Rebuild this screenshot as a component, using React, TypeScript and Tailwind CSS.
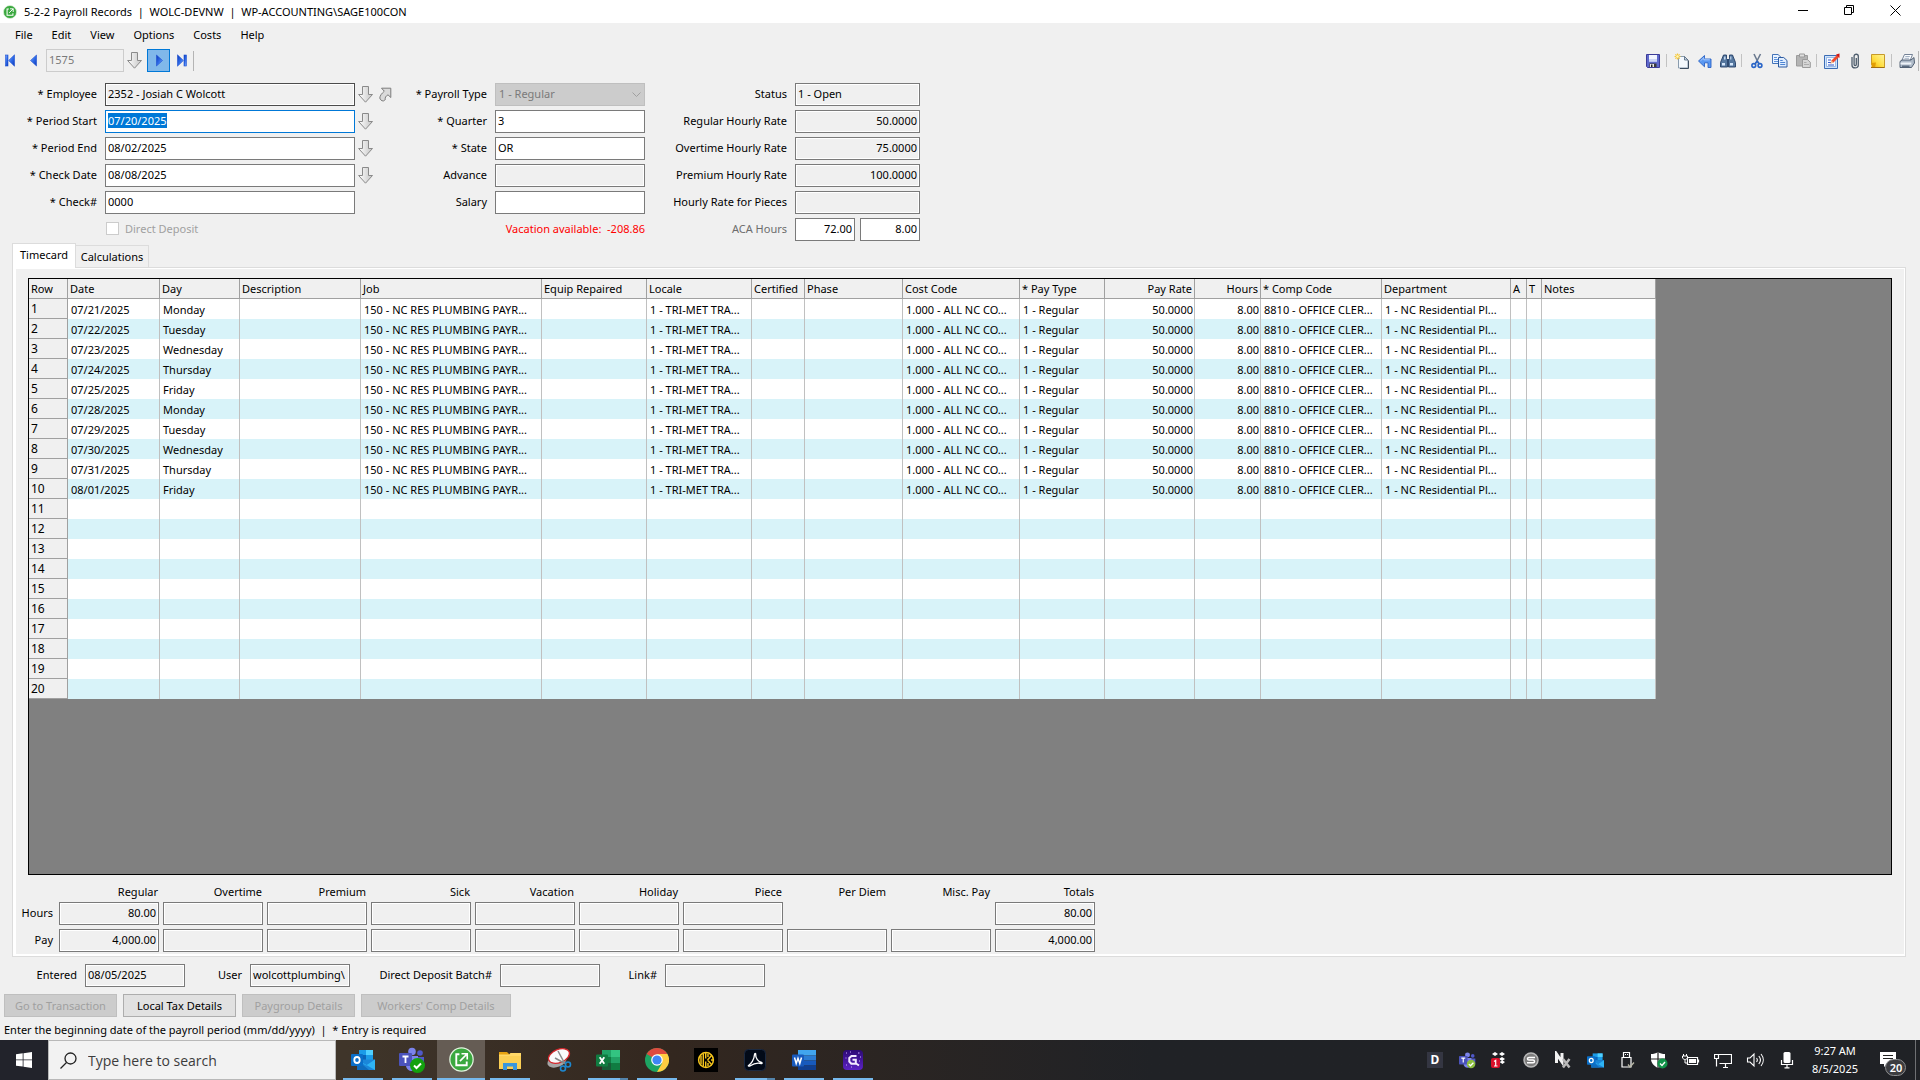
import { useEffect, useRef, type ReactNode } from "react";

/* ---------- field primitives ---------- */

const FIELD = "h-[23px] min-w-0 border px-0.5 pb-0.5 text-[11px] outline-none";
const READONLY = "bg-[#f0f0f0] shadow-[inset_0_0_0_1px_#fff]";

function Field({
  id,
  value = "",
  width,
  readOnly = false,
  right = false,
  dark = false,
  label,
}: {
  id: string;
  value?: string;
  width: string;
  readOnly?: boolean;
  right?: boolean;
  dark?: boolean;
  label?: string;
}) {
  return (
    <input
      id={id}
      aria-label={label}
      type="text"
      defaultValue={value}
      readOnly={readOnly}
      className={`${FIELD} ${width} ${dark ? "border-[#4c4c4c]" : "border-[#7a7a7a]"} ${readOnly ? READONLY : "bg-white"} ${right ? "text-right" : ""}`}
    />
  );
}

function Row({ id, label, labelWidth, muted, children }: { id: string; label: string; labelWidth: string; muted?: boolean; children: ReactNode }) {
  return (
    <div className="flex h-[23px] items-center">
      <label htmlFor={id} className={`mr-2 pb-px text-right whitespace-nowrap ${labelWidth} ${muted ? "text-[#6d6d6d]" : ""}`}>
        {label}
      </label>
      {children}
    </div>
  );
}

/* ---------- small arrows ---------- */

function DownArrow() {
  return (
    <svg width="15" height="17" viewBox="0 0 15 17" aria-hidden="true">
      <defs>
        <linearGradient id="silver" x1="0" y1="0" x2="1" y2="0">
          <stop offset="0" stopColor="#fff" />
          <stop offset="1" stopColor="#c4c4c4" />
        </linearGradient>
      </defs>
      <path d="M4.500.5h6v8h4L7.500 16.200.6 8.500h3.900z" fill="url(#silver)" stroke="#8a8a8a" />
    </svg>
  );
}

function LookupButton({ label }: { label: string }) {
  return (
    <button type="button" aria-label={label} className="ml-[3px] flex h-[23px] w-[15px] items-center justify-center">
      <DownArrow />
    </button>
  );
}

function DrillArrow() {
  return (
    <svg width="13" height="15" viewBox="0 0 13 15" aria-hidden="true">
      <path
        d="M2.500 1.200H11.800V10.500L9 7.800C6.800 9 5.800 10.600 6.300 12.600L4.300 14C2.500 13.800 1.200 12.800.8 11C1 8.500 2.600 6.600 5.300 4.200z"
        fill="#dadada"
        stroke="#7c7c7c"
      />
    </svg>
  );
}

/* ---------- record navigation icons ---------- */

function NavIcon({ kind }: { kind: "first" | "prev" | "next" | "last" }) {
  const flip = kind === "next" || kind === "last";
  const bar = kind === "first" || kind === "last";
  return (
    <svg width="10" height="13" viewBox="0 0 10 13" aria-hidden="true" className={flip ? "rotate-180" : ""}>
      <defs>
        <linearGradient id={`nav-${kind}`} x1="0" y1="0" x2="1" y2="1">
          <stop offset="0" stopColor="#8fb6ff" />
          <stop offset=".5" stopColor="#2f6be8" />
          <stop offset="1" stopColor="#0b38b8" />
        </linearGradient>
      </defs>
      {bar && <rect x=".5" y="1" width="2.500" height="11" fill={`url(#nav-${kind})`} stroke="#1c4fd0" strokeWidth=".6" />}
      <path d={bar ? "M9.500.800V12.200L3.600 6.500z" : "M7.500 1V12L1.500 6.500z"} fill={`url(#nav-${kind})`} stroke="#1c4fd0" strokeWidth=".6" />
    </svg>
  );
}

/* ---------- toolbar icons ---------- */

const ic = { width: 16, height: 16, viewBox: "0 0 16 16", "aria-hidden": true } as const;

const SaveIcon = () => (
  <svg {...ic}>
    <path d="M1.500 1.500h13v13h-12l-1-1z" fill="#5f69cc" stroke="#3c3c98" />
    <path d="M4 2h8v6.500H4z" fill="#f2f5ff" />
    <path d="M4 6h8v2.500H4z" fill="#cdd6f6" />
    <path d="M4.500 10.500h7V14h-7z" fill="#3b3b3b" />
    <path d="M5 11h4v3H5z" fill="#e9e9e9" />
    <path d="M6 11.500h1.500V14H6z" fill="#222" />
  </svg>
);
const NewIcon = () => (
  <svg {...ic}>
    <path d="M5 3.500h5.500l3.500 3.500v8H4.500V6z" fill="#f3f8fd" stroke="#8a9cae" />
    <path d="M10.500 3.500V7H14z" fill="#c6d6e6" stroke="#4f6378" strokeWidth=".8" />
    <path d="M14.500 7.500v8H6" fill="none" stroke="#3b4d60" />
    <path d="M3.500.5v6M.5 3.500h6M1.400 1.400l4.200 4.200M5.600 1.400 1.400 5.600" stroke="#f5c73a" strokeWidth="1.200" />
    <circle cx="3.500" cy="3.500" r="1.300" fill="#fff6b8" />
  </svg>
);
const UndoIcon = () => (
  <svg {...ic}>
    <path d="M1.500 8 7.500 2.500V6h6.500v8.500h-3V9.800H7.500v4z" fill="#5a98f2" stroke="#2a62c4" strokeWidth=".9" />
    <path d="M3.500 7.800 6.800 4.800v2h6" fill="none" stroke="#a9cbff" />
  </svg>
);
const FindIcon = () => (
  <svg {...ic}>
    <path d="M3.500 2h3v3.500l1 1.500v7h-7V9.500zM9.500 2h3l3 7.500V14h-7V7l1-1.500z" fill="#55779f" stroke="#243f66" strokeWidth=".9" />
    <path d="M7 6h2v4H7z" fill="#2c4a73" />
    <path d="M2 10h3v2.500H2zM10 10h3v2.500h-3zM4.300 3.500h1.200v3H4zM10.300 3.500h1v3h-1z" fill="#d4e6fb" />
  </svg>
);
const CutIcon = () => (
  <svg {...ic}>
    <path d="M5 1 9.600 10.500M11.500 1 6.700 10.500" stroke="#6b7a90" strokeWidth="1.600" />
    <circle cx="4.800" cy="12.500" r="1.900" fill="none" stroke="#2b66c8" strokeWidth="1.600" />
    <circle cx="11" cy="12.500" r="1.900" fill="none" stroke="#2b66c8" strokeWidth="1.600" />
    <path d="m6 10.700 2.100-2.500 2.200 2.500" fill="none" stroke="#2b66c8" strokeWidth="1.500" />
  </svg>
);
const CopyIcon = () => (
  <svg {...ic}>
    <path d="M.5 1.500H6l3 2.800v6.200H.5z" fill="#eaf3ff" stroke="#4373b8" />
    <path d="M2 4.500h3M2 6.500h4M2 8.500h4" stroke="#5e93dc" />
    <path d="M6.500 4.500h5.200l3.300 3v6.500H6.500z" fill="#dfedff" stroke="#2e5ba0" />
    <path d="M8.200 7.500h2.500M8.200 9.500h5M8.200 11.500h5" stroke="#4d84d2" />
  </svg>
);
const PasteIcon = () => (
  <svg {...ic}>
    <path d="M1.500 2.500h11v10.500h-11z" fill="#b4b4b4" stroke="#9c9c9c" />
    <path d="M4.500 1h5v3h-5z" fill="#dedede" stroke="#9b9b9b" />
    <path d="M7.500 6.500h4.800l3 2.700v5.300H7.500z" fill="#d6d6d6" stroke="#9a9a9a" />
    <path d="M9 9.500h2.500M9 11.500h5" stroke="#adadad" />
  </svg>
);
const EditIcon = () => (
  <svg {...ic}>
    <path d="M.5 2.500h13v13H.5z" fill="#cfe3fb" stroke="#3c6cb4" />
    <path d="M2.500 4.500h9v9h-9z" fill="#f6faff" stroke="#7aa4dd" strokeWidth=".7" />
    <path d="M4 7h3M4 9.500h3M4 12h6" stroke="#3156c8" strokeWidth="1.200" />
    <path d="m6.500 10.500 1-3L13 2l2 2-5.500 5.500z" fill="#f04b2c" />
    <path d="M12 1.500 15.500.5V5z" fill="#d01414" />
    <path d="m6.500 10.500 1-3 2 2z" fill="#f6c89a" />
  </svg>
);
const ClipIcon = () => (
  <svg {...ic}>
    <path d="M5 4v8.200c0 3.600 6.300 3.600 6.300 0V3.200c0-2.600-4.200-2.600-4.200 0v8.300c0 1.500 2.200 1.500 2.200 0V5" fill="none" stroke="#4d5c6c" strokeWidth="1.300" />
  </svg>
);
const NoteIcon = () => (
  <svg {...ic}>
    <defs>
      <linearGradient id="note" x1="1" y1="0" x2="0" y2="1">
        <stop offset="0" stopColor="#fff7a0" />
        <stop offset=".6" stopColor="#ffdc3c" />
        <stop offset="1" stopColor="#f0a800" />
      </linearGradient>
    </defs>
    <path d="M1.500 1.500h13v13h-10l-3-3z" fill="url(#note)" stroke="#c79a2a" />
    <path d="M1.500 10 6 9.500l-1 5H1.500z" fill="#e29e05" />
    <path d="M1 14.500h13.500" stroke="#a06e10" />
  </svg>
);
const PrintIcon = () => (
  <svg {...ic}>
    <path d="M5.500 1.500h8l-2.300 6H2.800z" fill="#fafcff" stroke="#65758a" strokeWidth=".9" />
    <path d="M6.300 3.500h4.500M5.500 5.300H10" stroke="#8fa0b5" strokeWidth=".8" />
    <path d="M1 8.500 3 7h9l3-2.500.5 5.500-3 4.500H1z" fill="#aebac8" stroke="#46566a" strokeWidth=".9" />
    <path d="M1.500 9.500h10.800v2H1.500z" fill="#eef3f8" />
    <path d="M3 12.500h7.500V14H3z" fill="#5c6c80" />
  </svg>
);

const Sep = () => <span className="mx-0.5 h-[13px] w-0.5 border-l border-[#c2c2c2]" />;

function ToolButton({ label, children }: { label: string; children: ReactNode }) {
  return (
    <button type="button" aria-label={label} className="flex h-[23px] w-[23px] items-center justify-center">
      {children}
    </button>
  );
}

function SageLogo({ size }: { size: number }) {
  return (
    <svg width={size} height={size} viewBox="0 0 24 24" aria-hidden="true">
      <circle cx="12" cy="12" r="11.200" fill="#3aa83f" stroke="#e3f3e0" strokeWidth="1.200" />
      <path d="M10 7H7v10.500h10V14" fill="none" stroke="#fff" strokeWidth="1.800" />
      <path d="M12 6.500h5.500V12M17.500 6.500 10.500 13.500" fill="none" stroke="#fff" strokeWidth="1.600" />
    </svg>
  );
}

/* ---------- timecard grid ---------- */

type Column = { title: string; width: string; right?: boolean };

const COLUMNS: Column[] = [
  { title: "Row", width: "w-[39px]" },
  { title: "Date", width: "w-[92px]" },
  { title: "Day", width: "w-[80px]" },
  { title: "Description", width: "w-[121px]" },
  { title: "Job", width: "w-[181px]" },
  { title: "Equip Repaired", width: "w-[105px]" },
  { title: "Locale", width: "w-[105px]" },
  { title: "Certified", width: "w-[53px]" },
  { title: "Phase", width: "w-[98px]" },
  { title: "Cost Code", width: "w-[117px]" },
  { title: "* Pay Type", width: "w-[85px]" },
  { title: "Pay Rate", width: "w-[90px]", right: true },
  { title: "Hours", width: "w-[66px]", right: true },
  { title: "* Comp Code", width: "w-[121px]" },
  { title: "Department", width: "w-[129px]" },
  { title: "A", width: "w-[16px]" },
  { title: "T", width: "w-[15px]" },
  { title: "Notes", width: "w-[114px]" },
];

const DAYS: [string, string][] = [
  ["07/21/2025", "Monday"],
  ["07/22/2025", "Tuesday"],
  ["07/23/2025", "Wednesday"],
  ["07/24/2025", "Thursday"],
  ["07/25/2025", "Friday"],
  ["07/28/2025", "Monday"],
  ["07/29/2025", "Tuesday"],
  ["07/30/2025", "Wednesday"],
  ["07/31/2025", "Thursday"],
  ["08/01/2025", "Friday"],
];

function cellsFor(row: number): string[] {
  const day = DAYS[row];
  if (!day) return Array(17).fill("");
  return [
    day[0],
    day[1],
    "",
    "150 - NC RES PLUMBING PAYR...",
    "",
    "1 - TRI-MET TRA...",
    "",
    "",
    "1.000 - ALL NC CO...",
    "1 - Regular",
    "50.0000",
    "8.00",
    "8810 - OFFICE CLER...",
    "1 - NC Residential Pl...",
    "",
    "",
    "",
  ];
}

function TimecardGrid() {
  return (
    <div className="flex-1 overflow-hidden border border-black bg-[#808080]">
      <table className="w-[1627px] table-fixed border-separate border-spacing-0">
        <colgroup>
          {COLUMNS.map((c) => (
            <col key={c.title} className={c.width} />
          ))}
        </colgroup>
        <thead>
          <tr>
            {COLUMNS.map((c) => (
              <th
                key={c.title}
                scope="col"
                className={`h-5 overflow-hidden border-r border-b border-[#a0a0a0] bg-[#f0f0f0] px-0.5 py-0 leading-[19px] font-normal whitespace-nowrap ${c.right ? "text-right" : "text-left"}`}
              >
                {c.title}
              </th>
            ))}
          </tr>
        </thead>
        <tbody>
          {Array.from({ length: 20 }, (_, r) => (
            <tr key={r} className="bg-white even:bg-[#d8f3f9]">
              <th scope="row" className="h-5 border-r border-b border-[#a0a0a0] bg-[#f0f0f0] px-0.5 py-0 text-left align-top text-xs leading-[19px] font-normal">
                {r + 1}
              </th>
              {cellsFor(r).map((text, i) => (
                <td
                  key={i}
                  className={`h-5 overflow-hidden border-r border-[#c0c0c0] pt-px leading-[19px] whitespace-nowrap ${COLUMNS[i + 1].right ? "pr-px text-right" : "pl-[3px]"}`}
                >
                  {text}
                </td>
              ))}
            </tr>
          ))}
        </tbody>
      </table>
    </div>
  );
}

/* ---------- totals ---------- */

const TOTALS: { name: string; hours?: string; pay: string }[] = [
  { name: "Regular", hours: "80.00", pay: "4,000.00" },
  { name: "Overtime", hours: "", pay: "" },
  { name: "Premium", hours: "", pay: "" },
  { name: "Sick", hours: "", pay: "" },
  { name: "Vacation", hours: "", pay: "" },
  { name: "Holiday", hours: "", pay: "" },
  { name: "Piece", hours: "", pay: "" },
  { name: "Per Diem", pay: "" },
  { name: "Misc. Pay", pay: "" },
  { name: "Totals", hours: "80.00", pay: "4,000.00" },
];

function Totals() {
  return (
    <div className="flex gap-1 pt-2 pb-0.5">
      <div className="flex w-[39px] flex-col gap-1 pt-[19px] text-right">
        <span className="h-[23px] pr-0.5 leading-[21px]">Hours</span>
        <span className="h-[23px] pr-0.5 leading-[21px]">Pay</span>
      </div>
      {TOTALS.map((t) => (
        <div key={t.name} className="flex w-[100px] flex-col">
          <span className="h-[19px] pr-px text-right leading-[18px]">{t.name}</span>
          <div className="mb-1 flex h-[23px]">
            {t.hours !== undefined && <Field id={`h-${t.name}`} label={`${t.name} hours`} value={t.hours} width="w-full" readOnly right />}
          </div>
          <Field id={`p-${t.name}`} label={`${t.name} pay`} value={t.pay} width="w-full" readOnly right />
        </div>
      ))}
    </div>
  );
}

/* ---------- taskbar icons ---------- */

const OutlookIcon = ({ size }: { size: number }) => (
  <svg width={size} height={size} viewBox="0 0 24 24" aria-hidden="true">
    <path d="M8 2h14v10H8z" fill="#1a9be8" />
    <path d="M15 2h7v5h-7z" fill="#50d0ff" />
    <path d="M8 7h7v5H8z" fill="#0a64b8" />
    <path d="M6 11.500h18V22H6z" fill="#1a86d9" />
    <path d="m6 11.500 9 6 9-6V22z" fill="#2fb4f5" />
    <path d="m6 12 12 10H6z" fill="#0f6cbd" />
    <rect x="0" y="6" width="12" height="12" rx="1" fill="#0a6fc9" />
    <ellipse cx="6" cy="12" rx="2.700" ry="3" fill="none" stroke="#fff" strokeWidth="1.800" />
  </svg>
);
const TeamsIcon = ({ size, small = false }: { size: number; small?: boolean }) => (
  <svg width={size} height={size} viewBox="0 0 26 26" aria-hidden="true">
    <circle cx="13" cy="4.500" r="3.800" fill="#7b83eb" />
    <circle cx="21" cy="6" r="2.800" fill="#5059c9" />
    <path d="M17 10h8v7c0 4-6 5-8 2z" fill="#5059c9" />
    <path d="M7 9h12v9c0 8-12 8-12 0z" fill="#7b83eb" />
    <rect x="0" y="6" width="13" height="13" rx="1" fill="#4b53bc" />
    <path d="M3.500 9.500h6M6.500 9.500V16" stroke="#fff" strokeWidth="1.800" />
    <circle cx="18.500" cy="18.500" r={small ? 6.500 : 7.500} fill={small ? "#8cbd3f" : "#13a10e"} />
    <path d="m15 18.500 2.500 2.500 4.500-4.500" fill="none" stroke="#fff" strokeWidth="2" />
  </svg>
);
const ExplorerIcon = () => (
  <svg width="24" height="24" viewBox="0 0 24 24" aria-hidden="true">
    <path d="M1 4h8l2 2v4H1z" fill="#e6a211" />
    <path d="M1 6.500h10l1.500-1.500H23v16H1z" fill="#ffd868" />
    <path d="M1 8h22v13H1z" fill="#fbcf55" />
    <path d="M5 22v-7h14v7h-4v-3.500H9V22z" fill="#3a96dd" />
  </svg>
);
const SnipIcon = () => (
  <svg width="26" height="26" viewBox="0 0 26 26" aria-hidden="true">
    <ellipse cx="11" cy="14" rx="10" ry="6" transform="rotate(-22 11 14)" fill="#a6a6a6" />
    <ellipse cx="13" cy="9" rx="11" ry="6.500" transform="rotate(-22 13 9)" fill="#fafafa" stroke="#d6272c" strokeWidth="1.300" />
    <path d="m12 4 7 13M9 11l9 5" stroke="#8a8a8a" strokeWidth="1.500" />
    <circle cx="17" cy="21.500" r="2.500" fill="none" stroke="#1e88d0" strokeWidth="1.600" />
    <circle cx="22" cy="17.500" r="2.500" fill="none" stroke="#1e88d0" strokeWidth="1.600" />
  </svg>
);
const ExcelIcon = () => (
  <svg width="24" height="24" viewBox="0 0 24 24" aria-hidden="true">
    <path d="M6 2h18v20H6z" fill="#185c37" />
    <path d="M6 2h9v7H6z" fill="#21a366" />
    <path d="M15 2h9v7h-9z" fill="#33c481" />
    <path d="M15 9h9v6h-9z" fill="#21a366" />
    <path d="M6 9h9v6H6zM15 15h9v7h-9z" fill="#107c41" />
    <rect y="6.500" width="12" height="12" rx="1" fill="#107c41" />
    <path d="m3.700 9.200 4.600 6.600M8.300 9.200l-4.600 6.600" stroke="#fff" strokeWidth="1.800" />
  </svg>
);
const WordIcon = () => (
  <svg width="24" height="24" viewBox="0 0 24 24" aria-hidden="true">
    <path d="M6 2h18v5.500H6z" fill="#41a5ee" />
    <path d="M6 7.500h18v5H6z" fill="#2b7cd3" />
    <path d="M6 12.500h18v5H6z" fill="#185abd" />
    <path d="M6 17.500h18V22H6z" fill="#103f91" />
    <rect y="6.500" width="12" height="12" rx="1" fill="#185abd" />
    <path d="m2.500 9.500 1.700 6L6 10.300l1.800 5.200 1.700-6" fill="none" stroke="#fff" strokeWidth="1.500" />
  </svg>
);
const ChromeIcon = () => (
  <svg width="24" height="24" viewBox="0 0 24 24" aria-hidden="true">
    <circle cx="12" cy="12" r="12" fill="#1da462" />
    <path d="M12 12 1.600 6A12 12 0 0 1 22.400 6H12z" fill="#dd4b3e" />
    <path d="M22.400 6A12 12 0 0 1 12 24l5.200-9L12 6z" fill="#ffcd41" />
    <circle cx="12" cy="12" r="5.800" fill="#fff" />
    <circle cx="12" cy="12" r="4.600" fill="#3f86f5" />
  </svg>
);
const KeeperIcon = () => (
  <svg width="24" height="24" viewBox="0 0 24 24" aria-hidden="true">
    <path d="M0 0h24v24H0z" fill="#000" />
    <circle cx="12" cy="12" r="7.400" fill="none" stroke="#f5c51c" strokeWidth="1.500" />
    <path
      d="M7 7.500v9M9.300 5.500v13M11.700 5v5.500M11.700 13.500V19M13.500 12l4.500-5M13.500 12l4.500 5M14 6v3M14 15v3M17 12h2.500"
      fill="none"
      stroke="#f5c51c"
      strokeWidth="1.400"
    />
  </svg>
);
const AcrobatIcon = () => (
  <svg width="22" height="22" viewBox="0 0 22 22" aria-hidden="true">
    <rect x=".5" y=".5" width="21" height="21" rx="4" fill="#020a18" stroke="#1b2940" />
    <path d="M4.500 16.500c2.500-1.200 5.700-6 6-11 .1-1.500 1.300-1.500 1.200 0-.3 3.500 2.500 7.300 6 8 .8.300.5 1.200-.4 1-3.800-1-8 .2-11 2.300-1 .8-2.500.2-1.800-.3z" fill="none" stroke="#fff" strokeWidth="1.300" />
  </svg>
);
const GIcon = () => (
  <svg width="22" height="22" viewBox="0 0 22 22" aria-hidden="true">
    <defs>
      <linearGradient id="gbox" x1="0" y1="0" x2="0" y2="1">
        <stop offset="0" stopColor="#2c0a74" />
        <stop offset="1" stopColor="#5c22c4" />
      </linearGradient>
    </defs>
    <rect x="1" y="1" width="20" height="20" rx="4" fill="url(#gbox)" />
    <path d="M14.500 7H9.500L7.300 9v3.500l2 2.200h4.500v-4H10.500M14 14.500l3 2" fill="none" stroke="#f3eaff" strokeWidth="2" />
    <path d="M4 4h1M8 3h1M16 4h1.500M18 8h1M3.500 9h1M17 12h1M4 16h1M9 18h1" stroke="#c9a9ff" strokeWidth="1.200" />
  </svg>
);

type App = { name: string; icon: ReactNode; state: "running" | "multi" | "active" | "idle" };

const APPS: App[] = [
  { name: "Outlook", icon: <OutlookIcon size={24} />, state: "running" },
  { name: "Teams", icon: <TeamsIcon size={26} />, state: "running" },
  { name: "Sage 100 Contractor", icon: <SageLogo size={25} />, state: "active" },
  { name: "File Explorer", icon: <ExplorerIcon />, state: "running" },
  { name: "Snipping Tool", icon: <SnipIcon />, state: "idle" },
  { name: "Excel", icon: <ExcelIcon />, state: "multi" },
  { name: "Chrome", icon: <ChromeIcon />, state: "running" },
  { name: "Keeper", icon: <KeeperIcon />, state: "idle" },
  { name: "Acrobat", icon: <AcrobatIcon />, state: "multi" },
  { name: "Word", icon: <WordIcon />, state: "running" },
  { name: "Greenshot", icon: <GIcon />, state: "running" },
];

const tr = { width: 18, height: 18, viewBox: "0 0 18 18", "aria-hidden": true } as const;

const TRAY: { name: string; icon: ReactNode }[] = [
  {
    name: "Dell",
    icon: <span className="flex h-4 w-4 items-center justify-center bg-[#343642] text-xs font-bold text-white">D</span>,
  },
  { name: "Teams status", icon: <TeamsIcon size={17} small /> },
  {
    name: "Dropbox",
    icon: (
      <svg {...tr}>
        <path d="m5 1 3 2-3 2-3-2zM12 1l3 2-3 2-3-2zM12 6l3 2-3 2-3-2zM9.500 11l3-1.500 2.500 1.500-2.500 2z" fill="#fff" />
        <rect x="1" y="7" width="9" height="10" rx="2" fill="#d8102a" />
        <path d="M4 10.500 5.700 9.300V15M4 15h3.500" fill="none" stroke="#fff" strokeWidth="1.200" />
      </svg>
    ),
  },
  {
    name: "Sync",
    icon: (
      <svg {...tr}>
        <circle cx="9" cy="9" r="7" fill="#7c7c7c" stroke="#b8b8b8" strokeWidth="1.500" />
        <path d="M13 6.500H7C5 6.500 5 9 7 9h4c2 0 2 2.800 0 2.800H5" fill="none" stroke="#fff" strokeWidth="1.500" />
      </svg>
    ),
  },
  {
    name: "Network extender",
    icon: (
      <svg {...tr}>
        <path d="M2.500 12V3l5.500 8V2" fill="none" stroke="#f2f2f2" strokeWidth="3" />
        <path d="m9 8 6.500 8.500M15.500 8 9 16.500" stroke="#b9b9b9" strokeWidth="2.500" />
      </svg>
    ),
  },
  { name: "Outlook status", icon: <OutlookIcon size={17} /> },
  {
    name: "USB",
    icon: (
      <svg {...tr}>
        <path d="M5.500 6V1.500h6V6M4 6.500h9V16H4z" fill="none" stroke="#fff" strokeWidth="1.200" />
        <path d="M7.500 3v1M9.500 3v1" stroke="#fff" />
        <path d="m10 13.500 2 2.500 4-4.500" fill="none" stroke="#b9b9a8" strokeWidth="1.300" />
      </svg>
    ),
  },
  {
    name: "Security",
    icon: (
      <svg {...tr}>
        <path d="M8 1c2 1.500 4.500 2 7 2v5c0 4-3 7-7 9-4-2-7-5-7-9V3c2.500 0 5-.5 7-2z" fill="#fff" />
        <path d="M8 1v16M1 8h14" stroke="#222" strokeWidth="1.200" />
        <circle cx="12.500" cy="12.500" r="5" fill="#12934a" />
        <path d="m10 12.500 2 2 3-3.500" fill="none" stroke="#fff" strokeWidth="1.300" />
      </svg>
    ),
  },
  {
    name: "Battery",
    icon: (
      <svg {...tr}>
        <path d="M5.500 6.500h10v7h-10zM16.500 8.500v3" fill="none" stroke="#fff" strokeWidth="1.200" />
        <path d="M7 8h7v4H7z" fill="#fff" />
        <path d="M1.500 3v2M4.500 3v2M.5 5h5v2c-1.500 2-3.500 2-5 0zM3 8.500V12h2" fill="#232427" stroke="#fff" />
      </svg>
    ),
  },
  {
    name: "Network",
    icon: (
      <svg {...tr}>
        <path d="M4.500 3.500h13v9h-12M9 16.500h5M11.500 12.500v4M.5 3.500h4v4h-4zM2.500 7.500v8" fill="none" stroke="#fff" strokeWidth="1.200" />
      </svg>
    ),
  },
  {
    name: "Volume",
    icon: (
      <svg {...tr}>
        <path d="M1.500 7h2.500l4-4v12l-4-4H1.500z" fill="none" stroke="#fff" strokeWidth="1.100" />
        <path d="M10.500 7c1 1.200 1 2.800 0 4M12.800 5c2 2.400 2 5.600 0 8M15 3c3 3.600 3 8.400 0 12" fill="none" stroke="#fff" strokeWidth="1.100" />
      </svg>
    ),
  },
  {
    name: "Microphone",
    icon: (
      <svg {...tr}>
        <rect x="5.500" y="1" width="7" height="11" rx="1.500" fill="#fff" />
        <path d="M3.500 9v4.500h11V9M9 13.500V17M6.500 16.800h5" fill="none" stroke="#fff" strokeWidth="1.200" />
      </svg>
    ),
  },
];

function Taskbar() {
  return (
    <footer className="flex h-10 bg-linear-to-r from-[#3f352a] from-18% via-[#33271f] via-35% to-[#202226] to-60% text-white">
      <button type="button" aria-label="Start" className="flex w-12 items-center justify-center bg-[#22232b]">
        <svg width="16" height="16" viewBox="0 0 16 16" aria-hidden="true">
          <path d="M0 2.200 6.700 1.300v6.200H0zM7.500 1.200 16 0v7.500H7.500zM0 8.300h6.700v6.300L0 13.700zM7.500 8.300H16V16l-8.500-1.200z" fill="#fff" />
        </svg>
      </button>
      <label className="flex w-[288px] items-center border border-[#b8b8b8] bg-[#f2f2f2] pl-[11px]">
        <svg width="17" height="17" viewBox="0 0 17 17" aria-hidden="true">
          <circle cx="10.500" cy="6.500" r="5.500" fill="none" stroke="#222" strokeWidth="1.300" />
          <path d="m6.500 10.500-6 6" stroke="#222" strokeWidth="1.300" />
        </svg>
        <input
          type="search"
          aria-label="Search"
          placeholder="Type here to search"
          className="ml-[11px] min-w-0 flex-1 pt-0.5 font-['Open_Sans','Noto_Sans',sans-serif] text-sm outline-none placeholder:text-[#3c3c3c]"
        />
      </label>
      <nav className="flex gap-px pl-[3px]">
        {APPS.map((a) => (
          <button
            key={a.name}
            type="button"
            aria-label={a.name}
            className={`flex w-12 flex-col items-center ${a.state === "active" ? "bg-[#655c54]" : ""}`}
          >
            <span className="flex h-[38px] items-center justify-center pt-px">{a.icon}</span>
            {a.state === "running" && <span className="h-0.5 w-10 bg-[#76b9ed]" />}
            {a.state === "active" && <span className="h-0.5 w-12 bg-[#76b9ed]" />}
            {a.state === "multi" && (
              <span className="flex h-0.5 w-10">
                <span className="w-8 bg-[#76b9ed]" />
                <span className="w-2 bg-[#5484ab]" />
              </span>
            )}
          </button>
        ))}
      </nav>
      <div className="ml-auto flex items-center">
        {TRAY.map((t) => (
          <button key={t.name} type="button" aria-label={t.name} className="flex h-10 w-8 items-center justify-center">
            {t.icon}
          </button>
        ))}
        <div className="w-16 text-center text-[11px] leading-[18px] whitespace-nowrap">
          <div>9:27 AM</div>
          <div>8/5/2025</div>
        </div>
        <button type="button" aria-label="Notifications" className="relative ml-2 h-10 w-10">
          <svg width="40" height="40" viewBox="0 0 40 40" aria-hidden="true">
            <path d="M5 12h16v12h-9l-3 3v-3H5z" fill="#fff" />
            <path d="M8 15.500h10M8 18.500h10" stroke="#222" strokeWidth="1.200" />
            <rect x="10.500" y="19.500" width="20" height="16" rx="8" fill="#3c3d40" stroke="#8b8c8e" />
          </svg>
          <span className="absolute top-5 left-[11px] w-5 text-center text-[11px] leading-[15px] font-semibold">20</span>
        </button>
        <span className="mr-1 h-10 border-l border-[#6f7073]" />
      </div>
    </footer>
  );
}

/* ---------- page ---------- */

const MENU = ["File", "Edit", "View", "Options", "Costs", "Help"];

export default function App() {
  const start = useRef<HTMLInputElement>(null);
  useEffect(() => {
    start.current?.focus();
    start.current?.select();
  }, []);

  return (
    <div className="flex min-h-screen flex-col bg-[#f0f0f0] font-['Noto_Sans','Open_Sans',sans-serif] text-[11px] leading-4 text-black">
      <header className="flex h-[23px] items-center bg-white pl-[3px]">
        <SageLogo size={14} />
        <h1 className="ml-[7px] text-[11px] font-normal whitespace-pre">5-2-2 Payroll Records  |  WOLC-DEVNW  |  WP-ACCOUNTING\SAGE100CON</h1>
        <div className="mr-0.5 ml-auto flex pb-0.5">
          <button type="button" aria-label="Minimize" className="flex h-[21px] w-[46px] items-center justify-center">
            <svg width="10" height="11" viewBox="0 0 10 11"><path d="M0 5.500h10" stroke="#000" /></svg>
          </button>
          <button type="button" aria-label="Restore" className="flex h-[21px] w-[46px] items-center justify-center">
            <svg width="10" height="11" viewBox="0 0 10 11">
              <path d="M.5 2.500h7v7h-7zM2.500 2.500v-2h7v7h-2" fill="none" stroke="#000" />
            </svg>
          </button>
          <button type="button" aria-label="Close" className="flex h-[21px] w-[46px] items-center justify-center">
            <svg width="11" height="11" viewBox="0 0 11 11"><path d="m.5.5 10 10M10.500.5l-10 10" stroke="#000" /></svg>
          </button>
        </div>
      </header>

      <nav className="flex h-[23px] items-center gap-[19px] pl-[15px]">
        {MENU.map((m) => (
          <button key={m} type="button">
            {m}
          </button>
        ))}
      </nav>

      <div className="flex h-[29px] items-center">
        <button type="button" aria-label="First record" className="ml-[5px]"><NavIcon kind="first" /></button>
        <button type="button" aria-label="Previous record" className="ml-[14px]"><NavIcon kind="prev" /></button>
        <input
          aria-label="Record number"
          disabled
          defaultValue="1575"
          className="ml-[7px] h-[23px] w-[78px] border border-[#ccc] bg-[#f0f0f0] px-0.5 pb-0.5 text-[11px] text-[#7a7a7a]"
        />
        <button type="button" aria-label="Record list" className="ml-[3px]"><DownArrow /></button>
        <button type="button" aria-label="Next record" className="ml-[5px] flex h-[23px] w-[23px] items-center justify-center border border-[#0078d7] bg-[#80b8ea]">
          <NavIcon kind="next" />
        </button>
        <button type="button" aria-label="Last record" className="ml-[7px]"><NavIcon kind="last" /></button>
        <span className="ml-1.5 h-5 border-l border-[#b4b4b4]" />
        <div className="ml-auto flex items-center">
          <ToolButton label="Save"><SaveIcon /></ToolButton>
          <Sep />
          <ToolButton label="New"><NewIcon /></ToolButton>
          <ToolButton label="Undo"><UndoIcon /></ToolButton>
          <ToolButton label="Find"><FindIcon /></ToolButton>
          <Sep />
          <ToolButton label="Cut"><CutIcon /></ToolButton>
          <ToolButton label="Copy"><CopyIcon /></ToolButton>
          <ToolButton label="Paste"><PasteIcon /></ToolButton>
          <Sep />
          <ToolButton label="Edit"><EditIcon /></ToolButton>
          <ToolButton label="Attachments"><ClipIcon /></ToolButton>
          <ToolButton label="Notes"><NoteIcon /></ToolButton>
          <Sep />
          <ToolButton label="Print"><PrintIcon /></ToolButton>
          <span className="mr-px h-5 border-l border-[#b4b4b4]" />
        </div>
      </div>

      <main className="flex flex-1 flex-col">
        <section className="flex pt-2">
          <div className="flex w-[395px] flex-col gap-1">
            <Row id="employee" label="* Employee" labelWidth="w-[97px]">
              <Field id="employee" value="2352 - Josiah C Wolcott" width="w-[250px]" readOnly dark />
              <LookupButton label="Employee list" />
              <button type="button" aria-label="Open employee" className="ml-[6px]"><DrillArrow /></button>
            </Row>
            <Row id="start" label="* Period Start" labelWidth="w-[97px]">
              <input
                ref={start}
                id="start"
                type="text"
                defaultValue="07/20/2025"
                className="h-[23px] w-[250px] border border-[#0078d7] bg-white px-0.5 pb-0.5 text-[11px] outline-none selection:bg-[#0078d7] selection:text-white"
              />
              <LookupButton label="Period start calendar" />
            </Row>
            <Row id="end" label="* Period End" labelWidth="w-[97px]">
              <Field id="end" value="08/02/2025" width="w-[250px]" />
              <LookupButton label="Period end calendar" />
            </Row>
            <Row id="checkdate" label="* Check Date" labelWidth="w-[97px]">
              <Field id="checkdate" value="08/08/2025" width="w-[250px]" />
              <LookupButton label="Check date calendar" />
            </Row>
            <Row id="check" label="* Check#" labelWidth="w-[97px]">
              <Field id="check" value="0000" width="w-[250px]" />
            </Row>
            <label className="ml-[106px] flex h-[23px] items-center pb-0.5 text-[#a0a0a0]">
              <input type="checkbox" disabled className="mr-1.5 h-[13px] w-[13px] appearance-none border border-[#ccc] bg-white" />
              Direct Deposit
            </label>
          </div>

          <div className="flex flex-col gap-1">
            <Row id="type" label="* Payroll Type" labelWidth="w-[92px]">
              <div className="grid items-center">
                <select
                  id="type"
                  disabled
                  className="col-start-1 row-start-1 h-[23px] w-[150px] appearance-none border border-[#bfbfbf] bg-[#ccc] px-[3px] pb-px text-[11px] text-[#7a7a7a] opacity-100"
                >
                  <option>1 - Regular</option>
                </select>
                <svg width="9" height="6" viewBox="0 0 9 6" aria-hidden="true" className="col-start-1 row-start-1 mr-1 justify-self-end">
                  <path d="m.5.5 4 4 4-4" fill="none" stroke="#a0a0a0" />
                </svg>
              </div>
            </Row>
            <Row id="quarter" label="* Quarter" labelWidth="w-[92px]"><Field id="quarter" value="3" width="w-[150px]" /></Row>
            <Row id="state" label="* State" labelWidth="w-[92px]"><Field id="state" value="OR" width="w-[150px]" /></Row>
            <Row id="advance" label="Advance" labelWidth="w-[92px]"><Field id="advance" width="w-[150px]" readOnly /></Row>
            <Row id="salary" label="Salary" labelWidth="w-[92px]"><Field id="salary" width="w-[150px]" /></Row>
            <p className="h-[23px] text-right leading-[21px] whitespace-pre text-[#f00]">Vacation available:  -208.86</p>
          </div>

          <div className="flex flex-col gap-1">
            <Row id="status" label="Status" labelWidth="w-[142px]"><Field id="status" value="1 - Open" width="w-[125px]" readOnly /></Row>
            <Row id="reg" label="Regular Hourly Rate" labelWidth="w-[142px]"><Field id="reg" value="50.0000" width="w-[125px]" readOnly right /></Row>
            <Row id="ot" label="Overtime Hourly Rate" labelWidth="w-[142px]"><Field id="ot" value="75.0000" width="w-[125px]" readOnly right /></Row>
            <Row id="prem" label="Premium Hourly Rate" labelWidth="w-[142px]"><Field id="prem" value="100.0000" width="w-[125px]" readOnly right /></Row>
            <Row id="pieces" label="Hourly Rate for Pieces" labelWidth="w-[142px]"><Field id="pieces" width="w-[125px]" readOnly /></Row>
            <Row id="aca" label="ACA Hours" labelWidth="w-[142px]" muted>
              <div className="flex gap-[5px]">
                <Field id="aca" value="72.00" width="w-[60px]" right />
                <Field id="aca2" label="ACA hours, second value" value="8.00" width="w-[60px]" right />
              </div>
            </Row>
          </div>
        </section>

        <section className="mr-[14px] ml-3 flex flex-1 flex-col pt-0.5">
          <div role="tablist" className="relative z-10 -mb-px flex items-end">
            <button type="button" role="tab" aria-selected="true" className="h-[25px] w-16 border border-b-0 border-[#dcdcdc] bg-white pb-0.5">
              Timecard
            </button>
            <button type="button" role="tab" aria-selected="false" className="mb-px h-[22px] w-[73px] border border-b-0 border-l-0 border-[#dcdcdc]">
              Calculations
            </button>
          </div>
          <div className="flex flex-1 flex-col border border-[#dcdcdc] bg-white pt-px pr-px pb-0.5 pl-[3px]">
            <div className="flex flex-1 flex-col bg-[#f0f0f0]">
              <div className="flex flex-1 flex-col px-3 pt-[9px]">
                <TimecardGrid />
              </div>
              <Totals />
            </div>
          </div>
        </section>

        <section className="flex items-center pt-[7px]">
          <Row id="entered" label="Entered" labelWidth="w-[77px]"><Field id="entered" value="08/05/2025" width="w-[100px]" readOnly /></Row>
          <Row id="user" label="User" labelWidth="w-[57px]"><Field id="user" value="wolcottplumbing\" width="w-[100px]" readOnly /></Row>
          <Row id="batch" label="Direct Deposit Batch#" labelWidth="w-[142px]"><Field id="batch" width="w-[100px]" readOnly /></Row>
          <Row id="link" label="Link#" labelWidth="w-[57px]"><Field id="link" width="w-[100px]" readOnly /></Row>
        </section>

        <section className="flex gap-1.5 pt-[7px] pl-1">
          <button type="button" disabled className="h-[23px] w-[113px] border border-[#bfbfbf] bg-[#ccc] text-[#a0a0a0]">Go to Transaction</button>
          <button type="button" className="h-[23px] w-[113px] border border-[#adadad] bg-[#e1e1e1]">Local Tax Details</button>
          <button type="button" disabled className="h-[23px] w-[113px] border border-[#bfbfbf] bg-[#ccc] text-[#a0a0a0]">Paygroup Details</button>
          <button type="button" disabled className="h-[23px] w-[150px] border border-[#bfbfbf] bg-[#ccc] text-[#a0a0a0]">Workers' Comp Details</button>
        </section>

        <p className="h-[23px] pt-px pl-1 leading-6 whitespace-pre">Enter the beginning date of the payroll period (mm/dd/yyyy)  |  * Entry is required</p>
      </main>

      <Taskbar />
    </div>
  );
}
